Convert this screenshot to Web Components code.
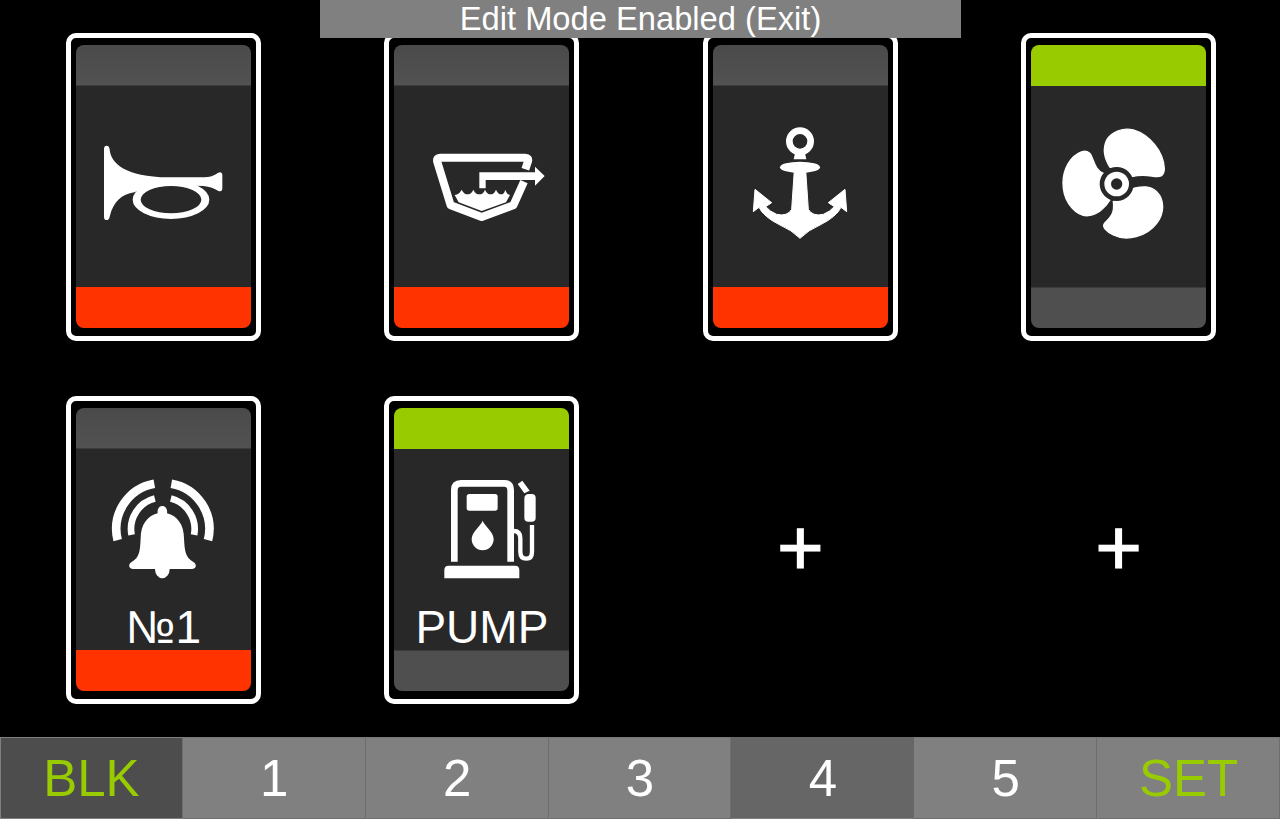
<!DOCTYPE html>
<html><head><meta charset="utf-8">
<style>
html,body{margin:0;padding:0;background:#000;height:100%;overflow:hidden}
body{font-family:"Liberation Sans",Arial,sans-serif;color:#fff}
</style></head>
<body>
<app-screen>
  <edit-banner>Edit Mode Enabled (Exit)</edit-banner>
  <switch-card top="off" bottom="red" icon="horn"></switch-card>
  <switch-card top="off" bottom="red" icon="tank"></switch-card>
  <switch-card top="off" bottom="red" icon="anchor"></switch-card>
  <switch-card top="green" bottom="off" icon="fan"></switch-card>
  <switch-card top="off" bottom="red" icon="bell" label="№1"></switch-card>
  <switch-card top="green" bottom="off" icon="pump" label="PUMP"></switch-card>
  <add-slot></add-slot>
  <add-slot></add-slot>
  <tab-bar slot="nav">
    <tab-item kind="dark" accent>BLK</tab-item>
    <tab-item>1</tab-item>
    <tab-item>2</tab-item>
    <tab-item>3</tab-item>
    <tab-item kind="active">4</tab-item>
    <tab-item>5</tab-item>
    <tab-item accent>SET</tab-item>
  </tab-bar>
</app-screen>
<script>
const ICONS={
horn:{o:[95,135],s:`<path d="M27 42Q27 32 35 32Q43 32 44 44C48 85 90 125 220 127L320 127C345 127 358 122 368 114Q382 108 382 120L382 160Q382 172 370 168C358 160 345 155 325 153L228 150L150 160L118 172C80 178 55 200 44 245Q42 255 35 255Q27 255 27 245Z"/><path fill-rule="evenodd" d="M113 194A115 58 0 1 1 343 194A115 58 0 1 1 113 194ZM137 194A91 41 0 1 0 319 194A91 41 0 1 0 137 194Z"/>`},
tank:{o:[420,140],s:`<path fill="none" stroke="#fff" stroke-width="24" stroke-linejoin="round" d="M316 88L324 64Q327 53 316 53L62 53Q48 53 52 66L92 196L185 231L280 196L312 125"/><path d="M178 97H345V80L374 108L345 137V120H197V145H178Z"/><path d="M104 165Q118 163 125 149Q132 163 142 163Q154 163 160 149Q166 163 178 163Q190 163 195 149Q201 163 212 163Q222 163 228 149Q234 163 244 163Q252 163 256 149Q260 163 270 165L258 187L185 213L116 187Z"/>`},
anchor:{o:[745,120],s:`<path fill-rule="evenodd" d="M165 22A42 42 0 1 1 165 106A42 42 0 1 1 165 22ZM165 42A22 22 0 1 0 165 86A22 22 0 1 0 165 42Z"/><path d="M150 100H180L184 118H146Z"/><ellipse cx="165" cy="142" rx="60" ry="17"/><path stroke="#fff" stroke-width="3" stroke-linejoin="round" d="M148 150L182 150L190 268Q202 290 235 283Q255 275 268 260L250 248L300 208L305 275L288 262Q275 290 225 315Q190 330 165 355Q140 330 105 315Q55 290 42 262L25 275L30 208L80 248L62 260Q75 275 95 283Q128 290 140 268Z"/>`},
fan:{o:[1055,120],s:`<g stroke="#fff" stroke-width="4"><path d="M165 142C148 115 143 85 155 60C170 35 205 22 235 30C285 45 325 95 328 145C328 170 315 172 290 168C270 165 250 165 230 170Z"/><path d="M235 205C260 200 285 195 305 215C330 240 328 280 305 310C275 350 215 365 175 345C155 335 138 320 150 308C165 295 180 280 175 245Z"/><path d="M145 160C120 150 118 125 108 105C100 90 85 92 70 100C35 120 20 165 25 205C30 250 65 290 100 287C125 285 150 265 165 240Z"/></g><circle cx="185" cy="192" r="51" fill="#282828"/><circle cx="185" cy="192" r="37"/><circle cx="185" cy="192" r="17" fill="#282828"/>`},
bell:{o:[100,470],s:`<path d="M187 108C197 108 203 118 201 130C232 137 252 165 252 205C254 240 255 262 280 276C292 283 289 297 275 297L100 297C86 297 83 283 95 276C120 262 120 240 122 205C122 165 142 137 173 130C171 118 177 108 187 108Z"/><path d="M165 297A22 28 0 0 0 209 297Z"/><g fill="none" stroke="#fff"><path stroke-width="26" d="M53 210.5A138 138 0 0 1 163 41"/><path stroke-width="26" d="M214 41A138 138 0 0 1 324 210.5"/><path stroke-width="20" d="M94.700 194.500A94 94 0 0 1 164.500 85.800"/><path stroke-width="20" d="M212.500 85.800A94 94 0 0 1 282.300 194.500"/></g>`},
pump:{o:[435,470],s:`<path fill="none" stroke="#fff" stroke-width="20" d="M58 275L58 60Q58 40 78 40L207 40Q227 40 227 60L227 275"/><rect x="95" y="72" width="93" height="50" rx="8"/><path d="M143 152C150 170 176 185 176 208A33 33 0 0 1 110 208C110 185 136 170 143 152Z"/><path d="M28 325V300Q28 287 41 287H240Q253 287 253 300V325Z"/><path d="M282 72H290Q302 72 302 84V143Q302 155 290 155H280Q268 155 268 143V86Q268 72 282 72Z"/><path d="M248 42L262 32L284 62L268 70Z"/><path fill="none" stroke="#fff" stroke-width="13" d="M236 183Q256 183 256 205L256 245Q256 266 274 266Q291 266 291 245L291 165"/>`}
};
function tpl(html){const t=document.createElement('template');t.innerHTML=html;return t;}

const screenT=tpl(`<style>
:host{display:flex;flex-direction:column;width:1280px;height:819px;position:relative;background:#000}
.grid{flex:1;display:grid;grid-template-columns:repeat(4,195px);grid-auto-rows:308px;column-gap:123.4px;row-gap:55px;padding:33px 0 0 66px;align-content:start}
</style><slot name="banner"></slot><div class="grid"><slot></slot></div><slot name="nav"></slot>`);
class AppScreen extends HTMLElement{constructor(){super();this.attachShadow({mode:'open'}).append(screenT.content.cloneNode(true));}
connectedCallback(){const b=this.querySelector('edit-banner');if(b)b.slot='banner';}}

const bannerT=tpl(`<style>
:host{display:block;position:absolute;left:320px;top:0;width:641px;height:38px;background:#808080;color:#fff;font:32.7px/38px "Liberation Sans",Arial,sans-serif;text-align:center;z-index:2}
</style><slot></slot>`);
class EditBanner extends HTMLElement{constructor(){super();this.attachShadow({mode:'open'}).append(bannerT.content.cloneNode(true));}}

const cardT=tpl(`<style>
:host{display:flex;flex-direction:column;box-sizing:border-box;width:195px;height:308px;border:5px solid #fff;border-radius:10px;padding:7px 5px 8px;background:#000}
.band{height:41px;flex:none}
.band.off{background:#4f4f4f}
.band.top.off{background:linear-gradient(#4a4a4a,#525252)}
.band.top{border-radius:8px 8px 0 0}
.band.top.off{box-shadow:inset 0 -1px 0 #3c3c3c}
.band.bottom{border-radius:0 0 8px 8px}
.band.bottom.off{box-shadow:inset 0 1px 0 #3c3c3c}
.band.red{background:#ff3300}
.band.green{background:#99cc00}
.body{flex:1;background:#282828;display:grid;min-height:0}
.body>*{grid-area:1/1}
svg{width:100%;height:100%;display:block;fill:#fff}
.label{align-self:end;text-align:center;font:46px/46px "Liberation Sans",Arial,sans-serif;color:#fff}
</style><div class="band top"></div><div class="body"><svg viewBox="0 0 175 201"></svg><div class="label"></div></div><div class="band bottom"></div>`);
class SwitchCard extends HTMLElement{constructor(){super();this.attachShadow({mode:'open'}).append(cardT.content.cloneNode(true));}
connectedCallback(){const r=this.shadowRoot,top=this.getAttribute('top'),bot=this.getAttribute('bottom');
r.querySelector('.top').classList.add(top);r.querySelector('.bottom').classList.add(bot);
r.querySelector('.label').textContent=this.getAttribute('label')||'';
const name=this.getAttribute('icon'),ic=ICONS[name];
const cardX={horn:76,bell:76,tank:394,pump:394,anchor:713,fan:1031}[name];
const cardY=(name==='bell'||name==='pump')?449:86;
r.querySelector('svg').innerHTML=`<g transform="translate(${ic.o[0]-cardX} ${ic.o[1]-cardY}) scale(${1/3})">${ic.s}</g>`;}}

const addT=tpl(`<style>
:host{display:flex;align-items:center;justify-content:center;box-sizing:border-box;width:195px;height:308px;padding-bottom:5px}
.p{font:80px/80px "Liberation Sans",Arial,sans-serif;color:#fff;-webkit-text-stroke:1.2px #fff}
</style><span class="p">+</span>`);
class AddSlot extends HTMLElement{constructor(){super();this.attachShadow({mode:'open'}).append(addT.content.cloneNode(true));}}

const barT=tpl(`<style>
:host{display:grid;grid-template-columns:repeat(7,1fr);height:82px;flex:none}
</style><slot></slot>`);
class TabBar extends HTMLElement{constructor(){super();this.attachShadow({mode:'open'}).append(barT.content.cloneNode(true));}}

const itemT=tpl(`<style>
:host{display:flex;align-items:center;justify-content:center;box-sizing:border-box;background:#808080;color:#fff;font:51px/1 "Liberation Sans",Arial,sans-serif;border:1px solid #808080;border-right-color:#6e6e6e;border-bottom-color:#6e6e6e;border-top-color:#777}
:host([kind=dark]){background:#4d4d4d;border-color:#808080 #6e6e6e #808080 #808080}
:host([kind=active]){background:#666;border-color:#666 #666 #808080 #666}
:host([accent]){color:#99cc00}
</style><slot></slot>`);
class TabItem extends HTMLElement{constructor(){super();this.attachShadow({mode:'open'}).append(itemT.content.cloneNode(true));}}

customElements.define('app-screen',AppScreen);
customElements.define('edit-banner',EditBanner);
customElements.define('switch-card',SwitchCard);
customElements.define('add-slot',AddSlot);
customElements.define('tab-bar',TabBar);
customElements.define('tab-item',TabItem);
</script>
</body></html>
